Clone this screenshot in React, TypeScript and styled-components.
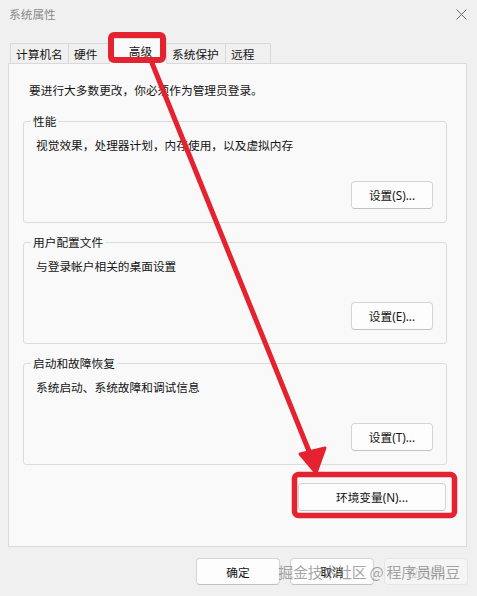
import React from "react";
import styled, { createGlobalStyle } from "styled-components";

const Global = createGlobalStyle`
  html, body { margin: 0; padding: 0; background: #f0f0f0; }
  * { box-sizing: border-box; }
`;

const FONT = `"Noto Sans", "Noto Sans CJK SC", sans-serif`;

const Window = styled.div`
  position: relative;
  width: 477px;
  height: 596px;
  background: #f0f0f0;
  border-radius: 8px;
  overflow: hidden;
  display: flex;
  flex-direction: column;
  font-family: ${FONT};
  font-size: 11.7px;
  color: #141414;
`;

const TitleBar = styled.div`
  height: 28px;
  display: flex;
  align-items: center;
  justify-content: space-between;
  padding: 0 10px 0 9px;
`;

const Title = styled.span`
  color: #8a8a8a;
  font-size: 11.7px;
  line-height: 16px;
`;

const TabStrip = styled.div`
  height: 35px;
  display: flex;
  align-items: flex-end;
  padding-left: 10px;
`;

const Tab = styled.div<{ $w: number; $active?: boolean }>`
  width: ${(p) => p.$w}px;
  height: ${(p) => (p.$active ? 26 : 20)}px;
  margin-bottom: ${(p) => (p.$active ? -1 : 0)}px;
  padding: 0 0 ${(p) => (p.$active ? "1px" : "0")} 5px;
  display: flex;
  align-items: center;
  justify-content: ${(p) => (p.$active ? "center" : "flex-start")};
  background: ${(p) => (p.$active ? "#f9f9f9" : "#f0f0f0")};
  border: 1px solid #d9d9d9;
  border-bottom: none;
  position: relative;
  z-index: ${(p) => (p.$active ? 2 : 1)};
  line-height: 16px;
  & + & { margin-left: -1px; }
`;

const Panel = styled.div`
  margin: 0 10px 0 8px;
  background: #f9f9f9;
  border: 1px solid #dadada;
  padding: 18px 19px 35px 14px;
  display: flex;
  flex-direction: column;
`;

const Intro = styled.div`
  line-height: 16px;
  padding-left: 6px;
`;

const Group = styled.fieldset<{ $gap: number }>`
  margin: ${(p) => p.$gap}px 0 0 0;
  min-width: 0;
  border: 1px solid #dcdcdc;
  border-radius: 3px;
  padding: 8px 13px 13px 12px;
  display: flex;
  flex-direction: column;
`;

const Legend = styled.legend`
  padding: 0 2px;
  margin-left: -5px;
  line-height: 16px;
`;

const Desc = styled.div`
  line-height: 16px;
`;

const ButtonRow = styled.div<{ $top: number; $right?: number }>`
  display: flex;
  justify-content: flex-end;
  margin-top: ${(p) => p.$top}px;
  margin-right: ${(p) => p.$right ?? 0}px;
`;

const Button = styled.button<{ $w: number; $h?: number; $disabled?: boolean }>`
  width: ${(p) => p.$w}px;
  height: ${(p) => p.$h ?? 28}px;
  background: ${(p) => (p.$disabled ? "#f5f5f5" : "#fdfdfd")};
  border: 1px solid ${(p) => (p.$disabled ? "#e6e6e6" : "#d4d4d4")};
  border-bottom-color: ${(p) => (p.$disabled ? "#e6e6e6" : "#c2c2c2")};
  border-radius: 4px;
  font-family: ${FONT};
  font-size: 11.7px;
  color: ${(p) => (p.$disabled ? "#cdcdcd" : "#141414")};
  padding: 0;
  line-height: 16px;
`;

const Footer = styled.div`
  display: flex;
  justify-content: flex-end;
  gap: 10px;
  padding: 11px 9px 0 0;
`;

const Watermark = styled.div`
  position: absolute;
  right: 17px;
  bottom: 14px;
  font-family: "Noto Sans CJK SC", sans-serif;
  font-size: 15px;
  line-height: 20px;
  color: rgba(105, 105, 105, 0.6);
  letter-spacing: -0.3px;
  white-space: nowrap;
`;

const Overlay = styled.svg`
  position: absolute;
  left: 0;
  top: 0;
  pointer-events: none;
  z-index: 5;
`;

const CloseIcon = () => (
  <svg width="11" height="11" viewBox="0 0 11 11">
    <path d="M0.5 0.5 L10.5 10.5 M10.5 0.5 L0.5 10.5" stroke="#6a6a6a" strokeWidth="1" fill="none" />
  </svg>
);

const RED = "#e42230";

export default function App() {
  return (
    <>
      <Global />
      <Window>
        <TitleBar>
          <Title>系统属性</Title>
          <CloseIcon />
        </TitleBar>
        <TabStrip>
          <Tab $w={59}>计算机名</Tab>
          <Tab $w={42}>硬件</Tab>
          <Tab $w={58} $active>高级</Tab>
          <Tab $w={60}>系统保护</Tab>
          <Tab $w={46}>远程</Tab>
        </TabStrip>
        <Panel>
          <Intro>要进行大多数更改，你必须作为管理员登录。</Intro>
          <Group $gap={15}>
            <Legend>性能</Legend>
            <Desc>视觉效果，处理器计划，内存使用，以及虚拟内存</Desc>
            <ButtonRow $top={28}>
              <Button $w={82}>设置(S)...</Button>
            </ButtonRow>
          </Group>
          <Group $gap={11}>
            <Legend>用户配置文件</Legend>
            <Desc>与登录帐户相关的桌面设置</Desc>
            <ButtonRow $top={28}>
              <Button $w={82}>设置(E)...</Button>
            </ButtonRow>
          </Group>
          <Group $gap={11}>
            <Legend>启动和故障恢复</Legend>
            <Desc>系统启动、系统故障和调试信息</Desc>
            <ButtonRow $top={28}>
              <Button $w={82}>设置(T)...</Button>
            </ButtonRow>
          </Group>
          <ButtonRow $top={18} $right={1}>
            <Button $w={148}>环境变量(N)...</Button>
          </ButtonRow>
        </Panel>
        <Footer>
          <Button $w={84} $h={27}>确定</Button>
          <Button $w={84} $h={27}>取消</Button>
          <Button $w={84} $h={27} $disabled>应用(A)</Button>
        </Footer>
        <Watermark>掘金技术社区 @ 程序员鼎豆</Watermark>
        <Overlay width="477" height="596" viewBox="0 0 477 596">
          <rect x="111" y="35" width="52" height="25" rx="3" fill="none" stroke={RED} strokeWidth="6" />
          <rect x="294.5" y="474.5" width="160" height="41" rx="4" fill="none" stroke={RED} strokeWidth="5.5" />
          <line x1="152" y1="63" x2="315" y2="466" stroke={RED} strokeWidth="5" strokeLinecap="round" />
          <polygon points="300,454 316,473 325,448" fill={RED} stroke={RED} strokeWidth="3" strokeLinejoin="round" />
        </Overlay>
      </Window>
    </>
  );
}
